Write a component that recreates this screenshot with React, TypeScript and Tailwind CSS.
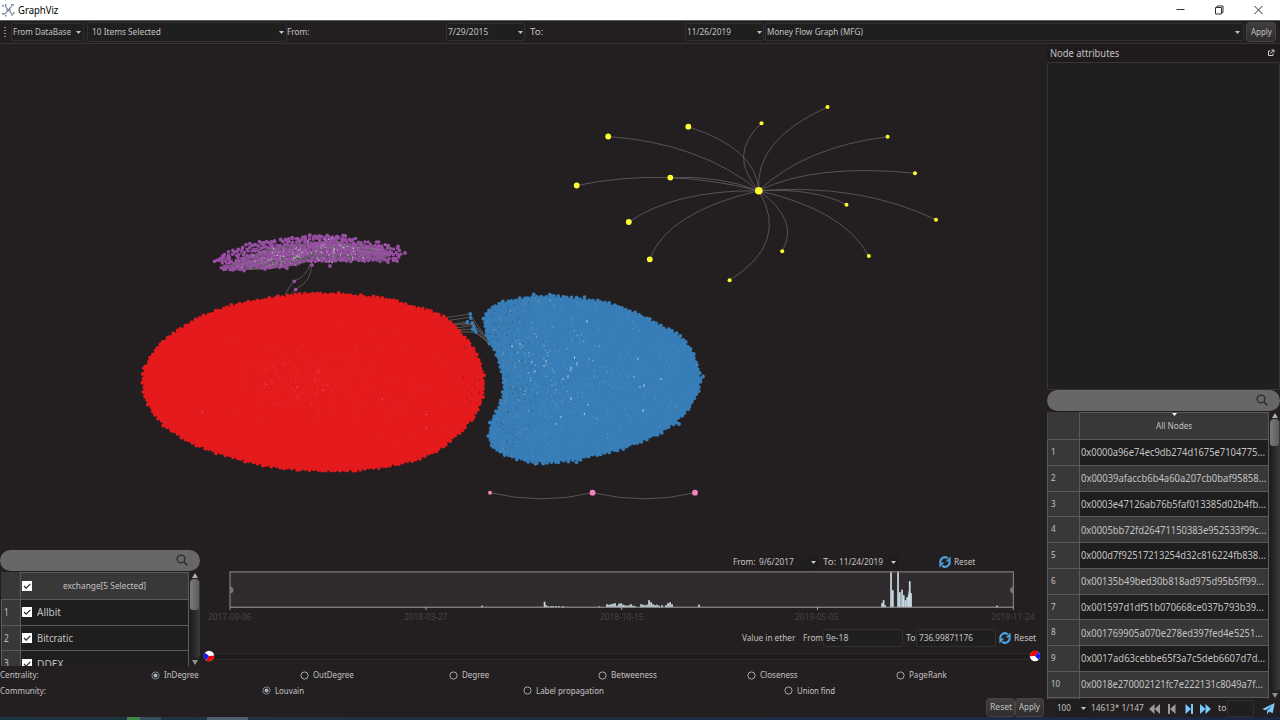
import React, { useLayoutEffect, useRef, useState } from 'react';

type Pt = [number, number];

/* Text squeezed or stretched horizontally to the width of its box. */
function Fit({ className = '', children }: { className?: string; children: string }) {
  const box = useRef<HTMLSpanElement>(null);
  const inner = useRef<HTMLSpanElement>(null);
  const [scale, setScale] = useState(1);
  useLayoutEffect(() => {
    if (box.current && inner.current) {
      setScale(box.current.clientWidth / inner.current.offsetWidth);
    }
  }, [children]);
  return (
    <span ref={box} className={`block shrink-0 whitespace-nowrap ${className}`}>
      <span ref={inner} className="inline-block origin-left" style={{ transform: `scaleX(${scale})` }}>
        {children}
      </span>
    </span>
  );
}

function rng(seed: number) {
  let s = seed;
  return () => {
    s = (s * 1664525 + 1013904223) % 4294967296;
    return s / 4294967296;
  };
}

function inside(x: number, y: number, poly: Pt[]) {
  let hit = false;
  for (let i = 0, j = poly.length - 1; i < poly.length; j = i++) {
    const [xi, yi] = poly[i];
    const [xj, yj] = poly[j];
    if (yi > y !== yj > y && x < ((xj - xi) * (y - yi)) / (yj - yi) + xi) hit = !hit;
  }
  return hit;
}

/* Evenly spaced, slightly jittered nodes along a closed outline. */
function rim(poly: Pt[], step: number, jitter: number, seed: number): Pt[] {
  const r = rng(seed);
  const out: Pt[] = [];
  let left = 0;
  for (let i = 0; i < poly.length; i++) {
    const a = poly[i];
    const b = poly[(i + 1) % poly.length];
    const len = Math.hypot(b[0] - a[0], b[1] - a[1]);
    let d = left;
    while (d < len) {
      const t = d / len;
      out.push([a[0] + (b[0] - a[0]) * t + (r() - 0.5) * jitter, a[1] + (b[1] - a[1]) * t + (r() - 0.5) * jitter]);
      d += step;
    }
    left = d - len;
  }
  return out;
}

const dots = (pts: Pt[], r: number) =>
  pts
    .map(([x, y]) => `M${(x - r).toFixed(1)} ${y.toFixed(1)}a${r} ${r} 0 1 0 ${2 * r} 0a${r} ${r} 0 1 0 ${-2 * r} 0`)
    .join('');

const dashes = (pts: Pt[], seed: number) => {
  const r = rng(seed);
  return pts.map(([x, y]) => `M${x.toFixed(1)} ${y.toFixed(1)}l${(r() * 0.8 - 0.2).toFixed(1)} ${(0.5 + r() * 1.3).toFixed(1)}`).join('');
};

const poly = (pts: Pt[]) => pts.map((p) => p.join(',')).join(' ');

const RED: Pt[] = [[143,382],[144,370],[150,358],[157,348],[166,339],[181,329],[199,318],[222,309],[243,303],[272,298],[300,294.5],[322,294],[342,294],[366,296.5],[385,299],[405,304],[420,309],[432,312],[444,318],[454,326],[466,339],[474,350],[480,362],[483,375],[484,388],[481,402],[474,416],[465,427],[454,437],[441,448],[423,457],[402,463],[378,467.5],[355,470],[334,471],[300,469.5],[266,465.5],[240,459],[215,452],[190,442],[166,427],[153,412],[145,398]];
const BLUE: Pt[] = [[484,318],[489,310],[501,303],[518,299.5],[535,296.5],[550,296.5],[568,298],[590,300],[610,304],[625,309],[643,316],[658,325],[675,333],[685,342],[693,353],[698,368],[700,378],[698,392],[693,402],[685,413],[674,423],[660,433],[640,442],[620,449],[600,454],[575,460],[550,462],[535,462],[515,458],[501,453],[491,446],[489,436],[491,422],[498,410],[502,400],[504,388],[503,375],[499,362],[495,350],[487,338],[485,328]];
const PURPLE: Pt[] = [[215,261],[220,268],[225,271],[244,270],[265,268],[290,267],[310,263],[330,263],[350,263],[375,262],[393,261],[402,258],[404,253],[400,248],[385,242],[370,240],[346,237],[328,236.5],[310,236],[297,238],[275,240],[255,243.5],[240,247],[228,253]];

function scatter(shape: Pt[], n: number, cx: number, cy: number, sx: number, sy: number, seed: number): Pt[] {
  const r = rng(seed);
  const out: Pt[] = [];
  for (let i = 0; i < n; i++) {
    const x = cx + (r() + r() + r() - 1.5) * sx;
    const y = cy + (r() + r() + r() - 1.5) * sy;
    if (inside(x, y, shape)) out.push([x, y]);
  }
  return out;
}

function purpleNodes(): Pt[] {
  const r = rng(41);
  const out: Pt[] = [];
  for (let row = 0; row < 12; row++) {
    for (let x = 214 + (row % 2) * 1.8; x < 406; x += 3.6) {
      const px = x + (r() - 0.5) * 1.8;
      const py = 236 + row * 3.1 + (r() - 0.5) * 1.8;
      const core = px > 250 && px < 312 && py > 252 + (312 - px) * 0.13 && r() < 0.4;
      if (inside(px, py, PURPLE) && !core && r() > 0.03) out.push([px, py]);
    }
  }
  return out;
}

const YELLOW: [number, number, number][] = [
  [608.2,136.5,2.9],[688.3,126.7,2.9],[761.5,123.2,2],[827.5,107,2],[887.6,136.7,2],[915,173.3,2],[936,219.8,2],[846.5,204.7,2],[868.8,256,2],[782.2,251.2,2],[729.6,280.2,2],[649.8,259.3,2.9],[628.8,222,2.9],[576.7,185.5,2.9],[670.3,177.6,2.9],[758.8,190.7,3.8],
];

function Graph() {
  return (
    <svg className="block h-[506px] w-[1047px] shrink-0" viewBox="0 44 1047 506">
      <g fill="none" stroke="#5d595a" strokeWidth="0.9">
        <path d="M608 136.5Q700 143 758.8 190.7M688 126.7Q756 148 758.8 190.7M761.5 123.2Q727 155 758.8 190.7M827.5 107Q754 140 758.8 190.7M887.6 136.7Q805 147 758.8 190.7M915 173.3Q815 163 758.8 190.7M936 219.8Q860 183 758.8 190.7M846.5 204.7Q815 188 758.8 190.7M868.8 256Q844 210 758.8 190.7M782.2 251.2Q800 220 758.8 190.7M729.6 280.2Q790 243 758.8 190.7M649.8 259.3Q667 212 758.8 190.7M628.8 222Q675 190 758.8 190.7M576.7 185.5Q665 167 758.8 190.7M670.3 177.6Q718 175 758.8 190.7" />
        <path d="M490 492.7Q542 505 592.5 492.7Q645 505 695 492.7" />
        <path d="M285 295Q289 286 294 281.5Q308 275 310 264M291 295L295.5 289.5Q312 281 311.5 264" />
        <path d="M446 317.5L470 314M448 320.5L471 317M452 324L468 322M454 325L472 323M456 328L473 325.5M457 330L474 329M458 332L475 332M462 325L475 324" />
        <path d="M471 316L490 343M472 322L491 346M474 325L490 341M475 330L491 345M476 333L490 344" />
      </g>
      <polygon points={poly([[222,268],[236,270.5],[262,269.5],[290,266.5],[308,262],[380,260],[394,254],[380,246],[325,241],[270,247]])} fill="#645866" />
      <path d="M236 266L316 245M248 267L322 245M262 268L318 250M255 260L320 246M284 262L312 247M290 260L308 250M280 254L300 250M312 246L390 254M318 244L384 250" stroke="#a79fa8" strokeWidth="0.8" />
      <path d={dots(purpleNodes(), 1.75)} fill="#984ea3" />
      <path d={dots(rim(PURPLE.slice(16).concat(PURPLE.slice(0, 3)), 4.4, 2.8, 9).filter((p) => p[1] < 262), 1.9)} fill="#984ea3" />
      <path d={dots([[311,261],[312,265],[294.2,281.3],[295.7,289.7],[287,268],[330,266],[244,270.5],[265,269],[388,262],[397,261],[214.5,261.3],[309.8,234.8],[309,251],[312,248],[307,254],[405,253],[398,246.5]], 1.9)} fill="#984ea3" />
      <path d={dashes(scatter(PURPLE, 50, 334, 249, 40, 11, 3), 5)} stroke="#ded3df" strokeWidth="0.8" />
      <path d={dashes(scatter(PURPLE, 70, 284, 257, 44, 12, 8), 6)} stroke="#c9c2c9" strokeWidth="0.8" />
      <path d={dashes(scatter(PURPLE, 130, 310, 253, 140, 22, 18), 6)} stroke="#4c3450" strokeWidth="0.9" />

      <polygon points={poly(RED)} fill="#e41a1c" />
      <path d={dots(rim(RED, 4.3, 2, 7), 2)} fill="#e41a1c" />
      <path d={dashes(scatter(RED, 150, 305, 382, 70, 34, 12), 2)} stroke="#ea5450" strokeWidth="0.5" />
      <path d={dashes(scatter(RED, 60, 430, 390, 110, 90, 23), 2)} stroke="#c9302f" strokeWidth="0.5" />
      <path d={dashes(scatter(RED, 60, 476, 385, 14, 80, 33), 2)} stroke="#6e1c1e" strokeWidth="0.7" />
      <path d="M318.3 371.5v1.4M297 386v1.3M323 389.5v1.3M382.4 398.5v1.3M266 384v1M202.5 411.5v1M426.5 414v1M426.5 427.5v1" stroke="#f6a6a2" strokeWidth="0.7" />

      <polygon points={poly(BLUE)} fill="#377eb8" />
      <path d={dots(rim(BLUE, 4.3, 2.1, 17), 2)} fill="#377eb8" />
      <path d={dots([[470.3,314],[470.8,318],[467.3,322],[472.3,323],[474,326.3],[472.7,329],[476,332],[475,330],[703,376.5],[700,379],[533.8,294.3],[549.8,294.6],[584.5,297.2],[679,424],[535.5,463.8],[543.5,463.5],[576.5,462.3]], 1.9)} fill="#377eb8" />
      <path d={dashes(scatter(BLUE, 330, 498, 368, 40, 130, 14), 2)} stroke="#3f4d60" strokeWidth="0.7" />
      <path d={dashes(scatter(BLUE, 180, 508, 375, 55, 110, 15), 2)} stroke="#8d9197" strokeWidth="0.7" />
      <path d={dashes(scatter(BLUE, 420, 560, 370, 140, 110, 16), 2)} stroke="#6a9fcb" strokeWidth="0.6" />
      <path d={dashes(scatter(BLUE, 90, 555, 365, 80, 70, 19), 2)} stroke="#a3c4dd" strokeWidth="0.7" />
      <path d="M571 366.5v4M574.5 356v3M577 362v3M568 375v3M532 361v2.5M544 365v2M535 370v2.5M563 378v2M571 397v3M588 404v2M584.5 413v2M644 384v3M640 386v2M643 409v3M561 416v2M638 358v2M587 320v3M556 423v2M661 378v2M512 345v3M520 343v2M546 360v2" stroke="#b9d2e4" strokeWidth="0.9" />

      <g fill="#ffff33">
        {YELLOW.map(([x, y, r]) => (
          <circle key={x} cx={x} cy={y} r={r} />
        ))}
      </g>
      <g fill="#f781bf">
        <circle cx="490" cy="492.7" r="2" />
        <circle cx="592.5" cy="492.7" r="2.9" />
        <circle cx="695" cy="492.7" r="2.9" />
      </g>
    </svg>
  );
}

function Caret({ className = '' }: { className?: string }) {
  return (
    <svg className={`h-[3px] w-[5px] shrink-0 ${className}`} viewBox="0 0 5 3">
      <path d="M0 0H5L2.5 3Z" fill="#c4c4c4" />
    </svg>
  );
}

const FIELD = 'flex shrink-0 items-center rounded-[2px] border border-[#302e2f] bg-[#1f1f1f]';
const BUTTON = 'flex shrink-0 items-center justify-center rounded-[3px] border border-[#1b1819] bg-linear-to-b from-[#403f3e] to-[#2e2d2c] outline outline-[#454344] -outline-offset-1';

function Refresh({ className = '' }: { className?: string }) {
  return (
    <svg className={`h-[12px] w-[12px] shrink-0 ${className}`} viewBox="0 0 12 12">
      <g fill="none" stroke="#4fa3df" strokeWidth="2.2">
        <path d="M1.4 6.6A4.5 4.5 0 0 1 8.8 2.4" />
        <path d="M10.6 5.4A4.5 4.5 0 0 1 3.2 9.6" />
      </g>
      <path d="M11.6 0.4V5.4H6.6ZM0.4 11.6V6.6H5.4Z" fill="#4fa3df" />
    </svg>
  );
}

function SearchBar({ className = '', iconClass }: { className?: string; iconClass: string }) {
  return (
    <div className={`flex h-[21px] shrink-0 items-center justify-end rounded-full bg-[#676767] ${className}`}>
      <svg className={`mb-px h-[12px] w-[12px] ${iconClass}`} viewBox="0 0 12 12" fill="none" stroke="#2b2b2b" strokeWidth="1.3">
        <circle cx="5" cy="5" r="3.9" />
        <path d="M8 8L11.3 11.3" strokeWidth="1.6" />
      </svg>
    </div>
  );
}

function ScrollBar({ thumb }: { thumb: string }) {
  return (
    <div className="flex w-[11px] shrink-0 flex-col items-center bg-[#231f20]">
      <svg className="mt-[2px] h-[5px] w-[6px] shrink-0" viewBox="0 0 6 5"><path d="M3 0L6 5H0Z" fill="#b0b0b0" /></svg>
      <div className="mt-px w-[10px] grow overflow-hidden rounded-[4px] bg-linear-to-r from-[#1b1b1b] to-[#3a3a3a]">
        <div className={`w-[9px] rounded-[3px] bg-linear-to-r from-[#7b7b7b] to-[#5c5c5c] ${thumb}`} />
      </div>
      <svg className="mt-[2px] mb-px h-[5px] w-[6px] shrink-0" viewBox="0 0 6 5"><path d="M3 5L6 0H0Z" fill="#909090" /></svg>
    </div>
  );
}

function Check({ className = '' }: { className?: string }) {
  return (
    <svg className={`h-[10px] w-[10px] shrink-0 ${className}`} viewBox="0 0 10 10">
      <rect width="10" height="10" fill="#fff" />
      <path d="M2 5L4.2 7.2L8.3 2.8" fill="none" stroke="#222" strokeWidth="1.1" />
    </svg>
  );
}

const EXCHANGES = [
  { n: '1', name: 'Allbit', w: 'w-[24px]' },
  { n: '2', name: 'Bitcratic', w: 'w-[36px]' },
  { n: '3', name: 'DDEX', w: 'w-[26px]' },
];

function ExchangePanel() {
  return (
    <div className="flex h-[116px] w-[200px] shrink-0 flex-col">
      <SearchBar iconClass="mr-[12px]" />
      <div className="flex min-h-0 grow">
        <div className="ml-px flex w-[188px] shrink-0 flex-col overflow-hidden pt-px">
          <div className="flex h-[28px] shrink-0 bg-[#383838]">
            <div className="w-[19px] border-b border-[#5a5a5a]" />
            <div className="flex grow items-center border border-t border-[#5a5a5a]">
              <Check className="ml-px" />
              <Fit className="ml-[31px] w-[83px] leading-[14px]">exchange[5 Selected]</Fit>
            </div>
          </div>
          {EXCHANGES.map((e) => (
            <div key={e.n} className="flex h-[25.7px] shrink-0 border-b border-[#5a5a5a]">
              <div className="flex w-[19px] shrink-0 items-center border-l border-[#5a5a5a] bg-[#383838] pl-[2px]">
                <Fit className="w-[5px] text-[10px]">{e.n}</Fit>
              </div>
              <div className="flex grow items-center border-x border-[#5a5a5a] bg-[#1e1e1e] pl-px">
                <Check />
                <Fit className={`ml-[5px] text-[11.3px] leading-[16px] ${e.w}`}>{e.name}</Fit>
              </div>
            </div>
          ))}
        </div>
        <ScrollBar thumb="h-[31px]" />
      </div>
    </div>
  );
}

/* x offset from the chart's left edge, height */
const BARS: [number, number][] = [
  [252,1.5],[314.5,5.5],[316,2],[318,1],[321,1],[323,1],[326,1],[329,1],[333,1],[369,0.8],[377,3],[379,2.5],[381,3],[383,3.5],[385,4],[387,1.5],[389,3.5],[391,4],[393,2.5],[395,2],[397,1.5],[399,2],[401,3],[403,1.5],[405,1],[411,3],[413,2.5],[415,2],[417,2.5],[419,7],[421,5],[423,3],[425,2],[427,2.5],[429,1.5],[432,2],[436,2],[438,4],[440,5],[442,3],[469,2.5],[652,4],[653.5,7],[655,2],[661,36],[662.8,17],[668,36],[669.8,15],[672,17.5],[673.7,12],[675.4,7],[677,10],[678.7,13],[679.3,16],[679.7,26],[681,14],[767,1.5],
];

function Timeline() {
  return (
    <svg className="block h-[42px] w-[844px] shrink-0" viewBox="203 570 844 42">
      <rect x="230" y="571.9" width="783.5" height="35" fill="#302c2e" />
      <g fill="#c8dbe4">
        {BARS.map(([x, h], i) => (
          <rect key={i} x={230 + x - 0.8} y={607 - h + 0.2} width="1.7" height={h} />
        ))}
      </g>
      <path d="M230 610V571.9H1013.4V610" fill="none" stroke="#7a7778" strokeWidth="1.3" />
      <path d="M230 607.2H1013.4M426 607V610M621.7 607V610M817.5 607V610" stroke="#a5a3a4" strokeWidth="1" fill="none" />
      <path d="M230 586.5Q233.5 587 233.5 590Q233.5 593 230 593.5ZM1013.4 586.5Q1010 587 1010 590Q1010 593 1013.4 593.5Z" fill="#777475" />
    </svg>
  );
}

function Ball({ end = false }: { end?: boolean }) {
  return (
    <svg className="h-[12px] w-[12px] shrink-0" viewBox="0 0 12 12">
      <circle cx="6" cy="6" r="5.2" fill="#fff" />
      {end ? (
        <>
          <path d="M6 6L0.8 6.3A5.2 5.2 0 0 1 9.3 2Z" fill="#f60000" />
          <path d="M6 6L9.3 2A5.2 5.2 0 0 1 9.6 9.7Z" fill="#1414f4" />
        </>
      ) : (
        <>
          <path d="M6 6L11.2 5.5A5.2 5.2 0 0 1 3 10.2Z" fill="#f60000" />
          <path d="M6 6L3 10.2A5.2 5.2 0 0 1 2 2.7Z" fill="#1414f4" />
        </>
      )}
    </svg>
  );
}

function TimelinePanel() {
  return (
    <div className="flex h-[116px] w-[847px] flex-col pl-[3px]">
      <div className="flex h-[20px] shrink-0 items-center pt-[4px] pl-[530px] leading-[14px]">
        <Fit className="w-[23px]">From:</Fit>
        <div className="ml-px flex h-[15px] w-[61px] items-center bg-[#211e1f] pl-[2px]">
          <Fit className="w-[35px]">9/6/2017</Fit>
          <div className="ml-auto flex h-[14px] w-[9px] items-center justify-center border-r border-[#1a1818] bg-[#1f1d1d]"><Caret /></div>
        </div>
        <Fit className="ml-[5px] w-[13px]">To:</Fit>
        <div className="ml-px flex h-[15px] w-[61px] items-center bg-[#211e1f] pl-[2px]">
          <Fit className="w-[44px]">11/24/2019</Fit>
          <div className="ml-auto flex h-[14px] w-[9px] items-center justify-center border-r border-[#1a1818] bg-[#1f1d1d]"><Caret /></div>
        </div>
        <Refresh className="ml-[41px]" />
        <Fit className="ml-[3px] w-[21px]">Reset</Fit>
      </div>
      <Timeline />
      <div className="flex h-[10px] shrink-0 items-center justify-between pr-[12px] pl-[5px] text-[9.5px] leading-[10px] text-[#464344]">
        {['2017-09-06', '2018-03-27', '2018-10-15', '2019-05-05', '2019-11-24'].map((d) => (
          <Fit key={d} className="w-[44px]">{d}</Fit>
        ))}
      </div>
      <div className="flex h-[25px] shrink-0 items-end pl-[539px] leading-[14px]">
        <div className="flex h-[18px] items-center">
          <Fit className="w-[53px]">Value in ether</Fit>
          <Fit className="ml-[8px] w-[20px]">From</Fit>
          <div className={`${FIELD} h-[18px] w-[80px] pl-[2px]`}><Fit className="w-[22px]">9e-18</Fit></div>
          <Fit className="ml-[3px] w-[10px]">To</Fit>
          <div className={`${FIELD} h-[18px] w-[80px] pl-[2px]`}><Fit className="w-[54px]">736.99871176</Fit></div>
          <Refresh className="ml-[3px]" />
          <Fit className="ml-[3px] w-[22px]">Reset</Fit>
        </div>
      </div>
      <div className="mt-[3px] flex h-[12px] shrink-0 items-center pr-[6px]">
        <Ball />
        <div className="h-[7px] grow border-y border-[#2e2b2c] bg-[#1d1d1d]" />
        <Ball end />
      </div>
    </div>
  );
}

function Radio({ on = false, label, w, className = '' }: { on?: boolean; label: string; w: string; className?: string }) {
  return (
    <div className={`flex shrink-0 items-center ${className}`}>
      <svg className="h-[9px] w-[9px] shrink-0" viewBox="0 0 9 9">
        <circle cx="4.5" cy="4.5" r="3.6" fill="none" stroke={on ? '#8f8f8f' : '#b5b5b5'} strokeWidth="0.9" />
        {on && <circle cx="4.5" cy="4.5" r="2" fill="#9fb2c6" />}
      </svg>
      <Fit className={`ml-[4px] ${w}`}>{label}</Fit>
    </div>
  );
}

const NODES = [
  '0x0000a96e74ec9db274d1675e7104775...', '0x00039afaccb6b4a60a207cb0baf95858...', '0x0003e47126ab76b5faf013385d02b4fb...',
  '0x0005bb72fd26471150383e952533f99c...', '0x000d7f92517213254d32c816224fb838...', '0x00135b49bed30b818ad975d95b5ff99...',
  '0x001597d1df51b070668ce037b793b39...', '0x001769905a070e278ed397fed4e5251...', '0x0017ad63cebbe65f3a7c5deb6607d7d...',
  '0x0018e270002121fc7e222131c8049a7f...',
];
const NODE_W = ['w-[184px]', 'w-[185px]', 'w-[185px]', 'w-[185px]', 'w-[185px]', 'w-[183px]', 'w-[183px]', 'w-[182px]', 'w-[184px]', 'w-[182px]'];

function RightPanel() {
  return (
    <div className="flex w-[233px] shrink-0 flex-col">
      <div className="flex h-[18px] shrink-0 items-center bg-[#1f1a1c] pl-[3px]">
        <Fit className="w-[69px] text-[11px] leading-[16px]">Node attributes</Fit>
        <svg className="mr-[5px] ml-auto h-[8px] w-[8px]" viewBox="0 0 8 8" fill="none" stroke="#d0d0d0" strokeWidth="1">
          <path d="M3.5 2H1.5V6.5H6V4.5M3.5 4.5L6.5 1.5M4.5 1H7V3.5" />
        </svg>
      </div>
      <div className="h-[328px] shrink-0 rounded-[2px] border border-[#363334] bg-[#1f1f1f]" />
      <SearchBar iconClass="mr-[12px]" />
      <div className="flex h-[288px] shrink-0">
        <div className="flex w-[222px] shrink-0 flex-col overflow-hidden pt-px">
          <div className="flex h-[28px] shrink-0 border-l border-[#444] bg-[#383838]">
            <div className="w-[31px] border-b border-[#5a5a5a]" />
            <div className="flex grow flex-col items-center border border-[#5a5a5a]">
              <svg className="h-[3px] w-[5px] shrink-0" viewBox="0 0 5 3"><path d="M0 0H5L2.5 3Z" fill="#fff" /></svg>
              <Fit className="mt-[3px] w-[36px] leading-[14px]">All Nodes</Fit>
            </div>
          </div>
          {NODES.map((h, i) => (
            <div key={h} className="flex h-[25.75px] shrink-0 border-b border-[#5a5a5a]">
              <div className="flex w-[32px] shrink-0 items-center border-l border-[#5a5a5a] bg-[#383838] pl-[3px]">
                <Fit className={i === 9 ? 'w-[9px]' : 'w-[5px]'}>{String(i + 1)}</Fit>
              </div>
              <div className={`flex w-[190px] items-center border-x border-[#5a5a5a] pl-[1px] ${i % 2 ? 'bg-[#383838]' : 'bg-[#1e1e1e]'}`}>
                <Fit className={`text-[11.3px] leading-[16px] ${NODE_W[i]}`}>{h}</Fit>
              </div>
            </div>
          ))}
          <div className="flex grow border-l border-[#5a5a5a]"><div className="w-[31px] bg-[#383838]" /><div className="grow border-x border-[#5a5a5a] bg-[#1e1e1e]" /></div>
        </div>
        <ScrollBar thumb="h-[27px]" />
      </div>
      <div className="flex grow items-center pt-px pl-[8px]">
        <div className="flex h-[17px] w-[34px] items-center bg-[#1f1d1d] pl-[2px]">
          <Fit className="w-[14px]">100</Fit>
          <Caret className="mr-[3px] ml-auto" />
        </div>
        <Fit className="ml-[2px] w-[53px]">14613* 1/147</Fit>
        <svg className="ml-[4px] h-[12px] w-[66px] shrink-0" viewBox="0 0 66 12">
          <path d="M6.5 1V11L1 6ZM12 1V11L6.5 6Z" fill="#999" />
          <path d="M20 1H22V11H20ZM27.5 1V11L22 6Z" fill="#999" />
          <path d="M37.5 1L43 6L37.5 11ZM43 1H45V11H43Z" fill="#79c8fb" />
          <path d="M52 1L57.5 6L52 11ZM57.5 1L63 6L57.5 11Z" fill="#79c8fb" />
        </svg>
        <Fit className="ml-[4px] w-[8px]">to</Fit>
        <div className={`${FIELD} ml-px h-[17px] w-[27px]`} />
        <svg className="ml-[8px] h-[12px] w-[13px]" viewBox="0 0 13 12">
          <path d="M12.7 0L10.7 10.3L7 8.6L5 11.4V7.8L10.3 2.4L3.8 7.3L0.3 5.9Z" fill="#79c8fb" />
        </svg>
      </div>
    </div>
  );
}

function TitleBar() {
  return (
    <div className="flex h-[20px] shrink-0 items-center bg-white text-black">
      <svg className="ml-[2px] h-[14px] w-[13px]" viewBox="0 0 13 14">
        <path d="M3 3L10 11M10 3L3 11M4 7H9" stroke="#8c99a9" strokeWidth="1.2" />
        <g fill="#7d8c9f">
          <rect x="0" y="2" width="2" height="1.5" /><rect x="3" y="1" width="1.5" height="2" /><rect x="9" y="1" width="3" height="1.5" />
          <rect x="0" y="10" width="3" height="1.5" /><rect x="3" y="12" width="1.5" height="1.5" /><rect x="9" y="11" width="2" height="1.5" />
          <rect x="11" y="9" width="1.5" height="2" /><rect x="5.5" y="6" width="2" height="2" />
        </g>
      </svg>
      <Fit className="ml-[3px] w-[40px] text-[10.7px] leading-[16px]">GraphViz</Fit>
      <svg className="ml-auto mr-[16px] h-[10px] w-[88px]" viewBox="0 0 88 10" fill="none" stroke="#333" strokeWidth="1">
        <path d="M0.5 4.5H8.5" />
        <path d="M39.5 2.5H45.5V9H39.5ZM41 2.5V1H47V7.5H45.5" />
        <path d="M78.5 1L86.5 9M86.5 1L78.5 9" />
      </svg>
    </div>
  );
}

function ToolBar() {
  return (
    <div className="flex h-[24px] shrink-0 items-center border-t border-b border-t-[#57625b] border-b-[#363334] pl-[4px] leading-[14px]">
      <svg className="h-[10px] w-[2px] shrink-0" viewBox="0 0 2 10" fill="#8a8a8a">
        <rect width="2" height="1" /><rect y="3" width="2" height="1" /><rect y="6" width="2" height="1" /><rect y="9" width="2" height="1" />
      </svg>
      <div className={`${FIELD} ml-[5px] h-[18px] w-[73px] pl-px`}>
        <Fit className="w-[58px]">From DataBase</Fit>
        <Caret className="mr-[2px] ml-auto" />
      </div>
      <div className={`${FIELD} ml-[3px] h-[20px] w-[200px] pl-[4px]`}>
        <Fit className="w-[69px]">10 Items Selected</Fit>
        <Caret className="mr-[2px] ml-auto" />
      </div>
      <Fit className="w-[23px]">From:</Fit>
      <div className={`${FIELD} ml-[136px] h-[18px] w-[79px] pl-px`}>
        <Fit className="w-[40px]">7/29/2015</Fit>
        <div className="ml-auto flex h-[15px] w-[9px] items-center justify-center border-l border-[#1a1818]"><Caret /></div>
      </div>
      <Fit className="ml-[5px] w-[13px]">To:</Fit>
      <div className={`${FIELD} ml-[142px] h-[18px] w-[79px] pl-px`}>
        <Fit className="w-[44px]">11/26/2019</Fit>
        <div className="ml-auto flex h-[15px] w-[9px] items-center justify-center border-l border-[#1a1818]"><Caret /></div>
      </div>
      <div className={`${FIELD} ml-px h-[18px] w-[479px] pl-px`}>
        <Fit className="w-[96px]">Money Flow Graph (MFG)</Fit>
        <Caret className="mr-[3px] ml-auto" />
      </div>
      <div className={`${BUTTON} ml-[2px] h-[20px] w-[30px]`}><Fit className="w-[21px]">Apply</Fit></div>
    </div>
  );
}

export default function App() {
  return (
    <div className="flex h-[720px] w-[1280px] flex-col overflow-hidden bg-[#231f20] font-['Noto_Sans',sans-serif] text-[9.75px] text-[#c3c1c1]">
      <TitleBar />
      <ToolBar />
      <div className="flex h-[673px] shrink-0">
        <div className="flex w-[1047px] shrink-0 flex-col">
          <Graph />
          <div className="flex h-[116px] shrink-0">
            <ExchangePanel />
            <TimelinePanel />
          </div>
          <div className="mt-px flex h-[16px] shrink-0 items-center leading-[14px]">
            <Fit className="w-[39px]">Centrality:</Fit>
            <Radio on className="ml-[111.5px] w-[149px]" label="InDegree" w="w-[35px]" />
            <Radio className="w-[149px]" label="OutDegree" w="w-[41px]" />
            <Radio className="w-[149px]" label="Degree" w="w-[27px]" />
            <Radio className="w-[149px]" label="Betweeness" w="w-[46px]" />
            <Radio className="w-[149px]" label="Closeness" w="w-[38px]" />
            <Radio label="PageRank" w="w-[38px]" />
          </div>
          <div className="flex h-[15px] shrink-0 items-center leading-[14px]">
            <Fit className="w-[46px]">Community:</Fit>
            <Radio on className="ml-[216px] w-[261px]" label="Louvain" w="w-[29px]" />
            <Radio className="w-[261px]" label="Label propagation" w="w-[68px]" />
            <Radio label="Union find" w="w-[38px]" />
          </div>
          <div className="flex grow items-center justify-end pr-[3px]">
            <div className={`${BUTTON} h-[19px] w-[29px]`}><Fit className="w-[22px]">Reset</Fit></div>
            <div className={`${BUTTON} h-[19px] w-[29px]`}><Fit className="w-[21px]">Apply</Fit></div>
          </div>
        </div>
        <RightPanel />
      </div>
      <div className="flex h-[3px] shrink-0 bg-linear-to-r from-[#1f3540] to-[#1c2746]">
        <div className="ml-[127px] w-[13px] bg-[#3f8a46]" />
        <div className="w-[21px] bg-[#35505a]" />
        <div className="ml-[46px] w-[41px] bg-[#4d626c]" />
      </div>
    </div>
  );
}
